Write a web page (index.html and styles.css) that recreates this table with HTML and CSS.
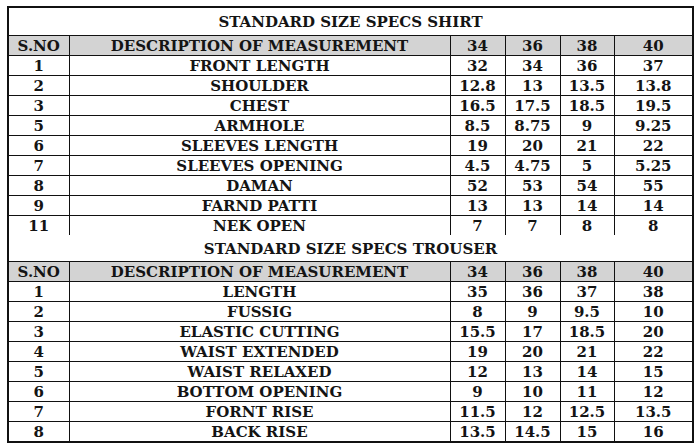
FILE: index.html
```html
<!DOCTYPE html>
<html>
<head>
<meta charset="utf-8">
<link rel="stylesheet" href="styles.css">
</head>
<body>
<table class="specs">
  <colgroup>
    <col class="c-no"><col class="c-desc"><col class="c-s"><col class="c-s"><col class="c-s3"><col class="c-s4">
  </colgroup>
  <tbody>
    <tr class="title"><td colspan="6">STANDARD SIZE SPECS SHIRT</td></tr>
    <tr class="head"><td>S.NO</td><td>DESCRIPTION OF MEASUREMENT</td><td>34</td><td>36</td><td>38</td><td>40</td></tr>
    <tr><td>1</td><td>FRONT LENGTH</td><td>32</td><td>34</td><td>36</td><td>37</td></tr>
    <tr><td>2</td><td>SHOULDER</td><td>12.8</td><td>13</td><td>13.5</td><td>13.8</td></tr>
    <tr><td>3</td><td>CHEST</td><td>16.5</td><td>17.5</td><td>18.5</td><td>19.5</td></tr>
    <tr><td>5</td><td>ARMHOLE</td><td>8.5</td><td>8.75</td><td>9</td><td>9.25</td></tr>
    <tr><td>6</td><td>SLEEVES LENGTH</td><td>19</td><td>20</td><td>21</td><td>22</td></tr>
    <tr><td>7</td><td>SLEEVES OPENING</td><td>4.5</td><td>4.75</td><td>5</td><td>5.25</td></tr>
    <tr><td>8</td><td>DAMAN</td><td>52</td><td>53</td><td>54</td><td>55</td></tr>
    <tr><td>9</td><td>FARND PATTI</td><td>13</td><td>13</td><td>14</td><td>14</td></tr>
    <tr class="last"><td>11</td><td>NEK OPEN</td><td>7</td><td>7</td><td>8</td><td>8</td></tr>
    <tr class="title title2"><td colspan="6">STANDARD SIZE SPECS TROUSER</td></tr>
    <tr class="head"><td>S.NO</td><td>DESCRIPTION OF MEASUREMENT</td><td>34</td><td>36</td><td>38</td><td>40</td></tr>
    <tr><td>1</td><td>LENGTH</td><td>35</td><td>36</td><td>37</td><td>38</td></tr>
    <tr><td>2</td><td>FUSSIG</td><td>8</td><td>9</td><td>9.5</td><td>10</td></tr>
    <tr><td>3</td><td>ELASTIC CUTTING</td><td>15.5</td><td>17</td><td>18.5</td><td>20</td></tr>
    <tr><td>4</td><td>WAIST EXTENDED</td><td>19</td><td>20</td><td>21</td><td>22</td></tr>
    <tr><td>5</td><td>WAIST RELAXED</td><td>12</td><td>13</td><td>14</td><td>15</td></tr>
    <tr><td>6</td><td>BOTTOM OPENING</td><td>9</td><td>10</td><td>11</td><td>12</td></tr>
    <tr><td>7</td><td>FORNT RISE</td><td>11.5</td><td>12</td><td>12.5</td><td>13.5</td></tr>
    <tr><td>8</td><td>BACK RISE</td><td>13.5</td><td>14.5</td><td>15</td><td>16</td></tr>
  </tbody>
</table>
</body>
</html>
```

FILE: styles.css
```css
html, body {
  margin: 0;
  padding: 0;
  background: #ffffff;
}
body {
  padding: 6px 0 0 7px;
  font-family: "DejaVu Serif", "Liberation Serif", serif;
  font-weight: bold;
  color: #141414;
}
.specs {
  border-collapse: collapse;
  table-layout: fixed;
  width: 685px;
  border: 2px solid #111;
  font-size: 15px;
  line-height: 16px;
}
.c-no { width: 61px; }
.c-desc { width: 381px; }
.c-s { width: 55px; }
.c-s3 { width: 54px; }
.c-s4 { width: 79px; }
.specs td {
  border: 1px solid #111;
  height: 18px;
  padding: 1px 0 0;
  text-align: center;
  vertical-align: middle;
  white-space: nowrap;
}
.specs tr.title td {
  height: 26px;
  border-left: 2px solid #111;
  border-right: 2px solid #111;
  padding-top: 1px;
}
.specs tr.title2 td {
  height: 25px;
  border-top: none;
}
.specs tr.last td {
  border-bottom: none;
}
.specs tr.head td {
  background: #d3d3d3;
}
```
